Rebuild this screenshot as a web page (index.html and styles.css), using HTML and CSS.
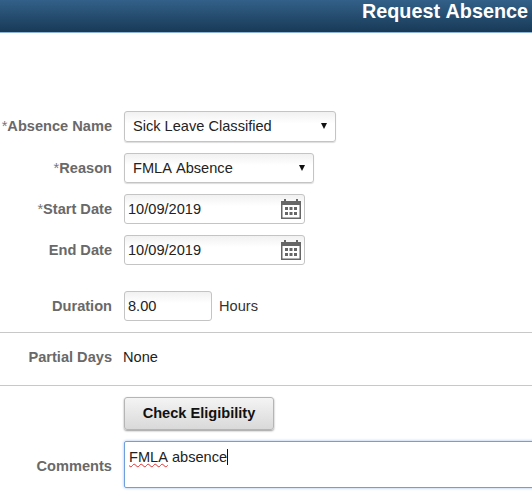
FILE: index.html
```html
<!DOCTYPE html>
<html lang="en">
<head>
<meta charset="utf-8">
<title>Request Absence</title>
<link rel="stylesheet" href="styles.css">
</head>
<body>
<header class="banner"><h1 class="banner-title">Request Absence</h1></header>
<main class="form">
  <div class="row row-name">
    <span class="label"><span class="req">*</span>Absence Name</span>
    <div class="field select select-name"><span>Sick Leave Classified</span><span class="caret"></span></div>
  </div>
  <div class="row row-reason">
    <span class="label"><span class="req">*</span>Reason</span>
    <div class="field select select-reason"><span>FMLA Absence</span><span class="caret"></span></div>
  </div>
  <div class="row row-start">
    <span class="label"><span class="req">*</span>Start Date</span>
    <div class="field date"><span>10/09/2019</span>
      <svg class="cal" viewBox="0 0 20 20" aria-hidden="true"><path fill="#666" d="M0 2h3V0h2v2h10V0h2v2h3v18H0z"/><path fill="#fff" d="M1.500 6h17v12.500h-17z"/><path fill="#666" d="M4 8h3v3H4zM8.500 8h3v3h-3zM13 8h3v3h-3zM4 13h3v3H4zM8.500 13h3v3h-3zM13 13h3v3h-3z"/></svg>
    </div>
  </div>
  <div class="row row-end">
    <span class="label">End Date</span>
    <div class="field date"><span>10/09/2019</span>
      <svg class="cal" viewBox="0 0 20 20" aria-hidden="true"><path fill="#666" d="M0 2h3V0h2v2h10V0h2v2h3v18H0z"/><path fill="#fff" d="M1.500 6h17v12.500h-17z"/><path fill="#666" d="M4 8h3v3H4zM8.500 8h3v3h-3zM13 8h3v3h-3zM4 13h3v3H4zM8.500 13h3v3h-3zM13 13h3v3h-3z"/></svg>
    </div>
  </div>
  <div class="row row-duration">
    <span class="label">Duration</span>
    <div class="field duration"><span>8.00</span></div>
    <span class="unit">Hours</span>
  </div>
  <div class="row row-partial">
    <span class="label label-partial">Partial Days</span>
    <span class="value">None</span>
  </div>
  <div class="row row-check">
    <span class="label"></span>
    <button class="check" type="button">Check Eligibility</button>
  </div>
  <div class="row row-comments">
    <span class="label label-comments">Comments</span>
    <div class="comment"><span class="misspelt">FMLA</span> absence<span class="cursor"></span></div>
  </div>
</main>
</body>
</html>
```
FILE: styles.css
```css
* { box-sizing: border-box; }
html, body { margin: 0; padding: 0; height: 494px; overflow: hidden; background: #fff; }
body { font-family: "Liberation Sans", Arial, sans-serif; font-size: 14.6px; color: #222; font-kerning: none; }

.banner {
  height: 33px;
  background: linear-gradient(#336088, #183a57);
  border-bottom: 1px solid #8db4d2;
  display: flex;
  justify-content: flex-end;
  align-items: flex-start;
  padding-right: 4px;
}
.banner-title { margin: -1px 0 0; font-size: 19.8px; line-height: 24px; font-weight: 700; color: #fff; }

.row { display: flex; align-items: center; }
.label { width: 112px; flex: none; margin-right: 12px; text-align: right; font-weight: 700; color: #696969; white-space: nowrap; }
.req { font-weight: 400; color: #777; }

.field {
  height: 31px;
  border: 1px solid #c4c4c4;
  border-radius: 3px;
  background: linear-gradient(#f1f1f1, #fff 40%);
  display: flex;
  align-items: center;
  color: #222;
}
.select { padding: 0 8px; justify-content: space-between; box-shadow: 0 1px 1px #ddd; }
.select-name { width: 212px; padding-bottom: 2px; }
.row-name .label { padding-bottom: 2px; }
.select-reason { width: 190px; height: 30px; }
.caret { width: 0; height: 0; border-left: 3px solid transparent; border-right: 3px solid transparent; border-top: 6px solid #111; }

.date { width: 181px; height: 30px; padding: 0 3px 0 3px; justify-content: space-between; }
.cal { width: 20px; height: 20px; }
.duration { width: 88px; height: 30px; padding: 0 3px; }
.unit { margin-left: 7px; color: #333; }

.row-name { margin-top: 78px; }
.row-reason { margin-top: 11px; }
.row-start { margin-top: 11px; }
.row-end { margin-top: 11px; }
.row-duration { margin-top: 26px; }
.row-partial {
  margin-top: 11px;
  height: 54px;
  padding-bottom: 5px;
  border-top: 1px solid #c8c8c8;
  border-bottom: 1px solid #c8c8c8;
}
.label-partial { margin-right: 11px; }
.value { color: #222; }
.row-check { margin-top: 11px; }
.check {
  width: 150px;
  height: 33px;
  padding: 0 0 2px;
  border: 1px solid #b5b5b5;
  border-radius: 3px;
  background: linear-gradient(#f4f4f4, #d9d9d9);
  box-shadow: 0 1px 2px #999;
  font: 700 14.6px "Liberation Sans", Arial, sans-serif;
  font-kerning: none;
  color: #111;
}
.row-comments { margin-top: 11px; }
.label-comments { padding-top: 2px; }
.comment {
  flex: 1;
  height: 47px;
  margin-right: -3px;
  border: 1px solid #6f9fdc;
  border-radius: 2px 0 0 2px;
  box-shadow: 0 0 3px #9dbfe8;
  padding: 7px 4px;
  line-height: 16px;
  align-self: flex-start;
  color: #222;
}
.misspelt { text-decoration: underline wavy #d33; text-decoration-thickness: 1px; }
.cursor { display: inline-block; width: 1px; height: 16px; background: #111; vertical-align: top; }
```
